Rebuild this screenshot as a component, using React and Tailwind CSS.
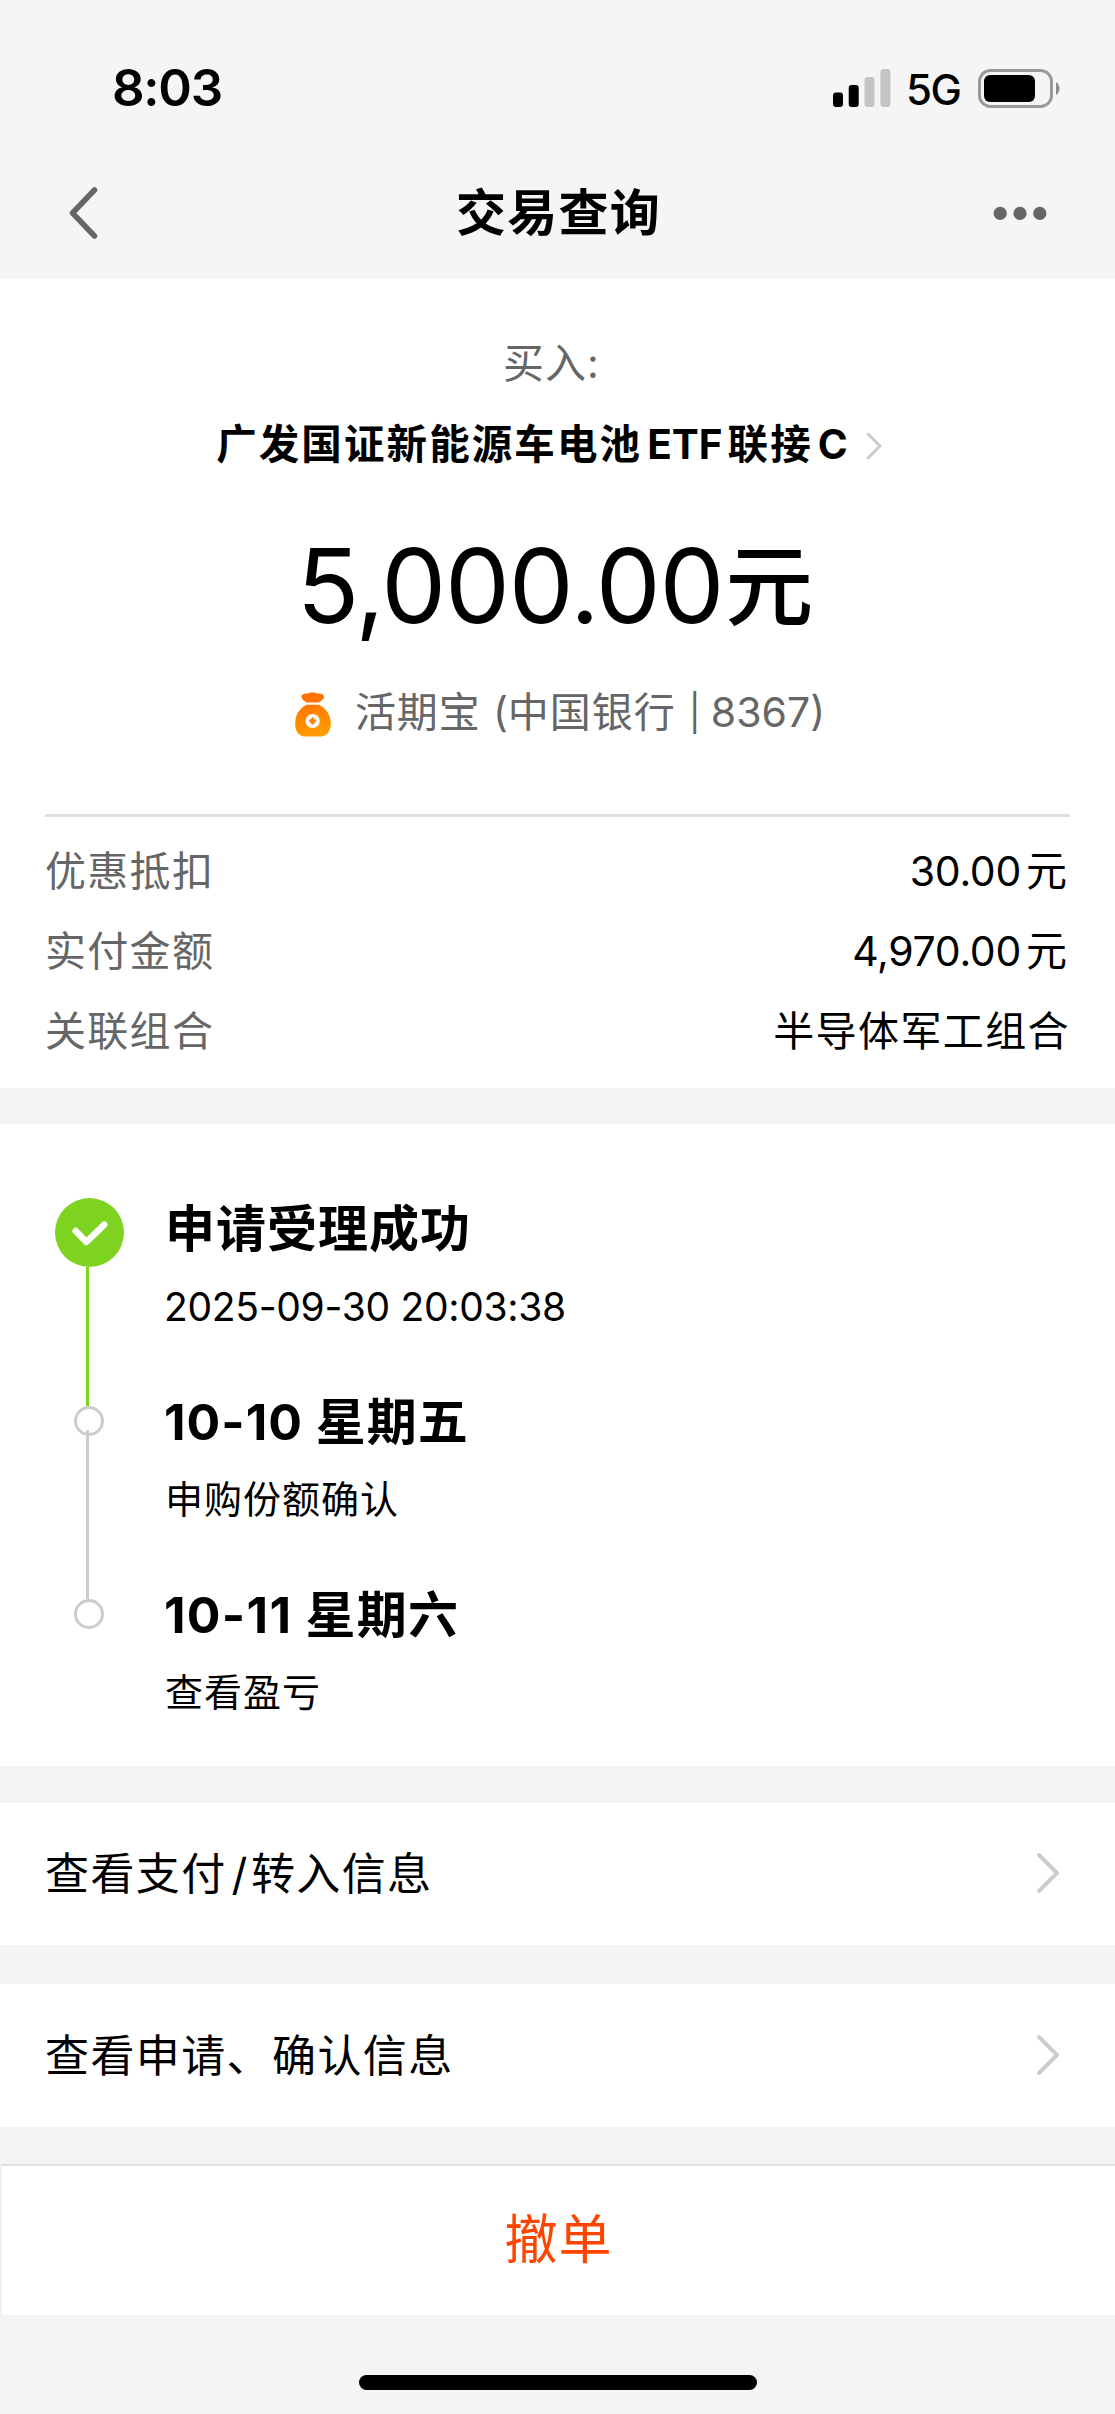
import React from "react";

function Chevron({ className, stroke = 4 }) {
  return (
    <svg viewBox="0 0 24 42" className={className} fill="none" stroke="#cccccc" strokeWidth={stroke} strokeLinecap="round" strokeLinejoin="round">
      <path d="M3 3 L21 21 L3 39" />
    </svg>
  );
}

function StatusBar() {
  return (
    <div className="flex h-[150px] justify-between bg-[#f5f5f5] pl-[112px] pr-[55px] pt-[58px]">
      <div className="h-[60px] text-[51px] font-semibold leading-[60px] tracking-[-1.3px]">8:03</div>
      <div className="flex h-[60px] items-center">
        <svg viewBox="0 0 58 38" className="h-[38px] w-[58px]">
          <rect x="0" y="23.5" width="10" height="14.5" rx="3" fill="#000" />
          <rect x="15.7" y="16" width="10" height="22" rx="3" fill="#000" />
          <rect x="31.5" y="8" width="10" height="30" rx="3" fill="#c4c4c4" />
          <rect x="47.4" y="0" width="10" height="38" rx="3" fill="#c4c4c4" />
        </svg>
        <div className="ml-[15px] mt-[3px] w-[72px] text-[42px] font-medium leading-[60px] tracking-[-1.5px]">5G</div>
        <svg viewBox="0 0 82 39" className="h-[39px] w-[82px]">
          <rect x="1.5" y="1.5" width="72" height="36" rx="11" fill="none" stroke="#999" strokeWidth="3" />
          <rect x="6" y="6" width="51" height="27" rx="6" fill="#000" />
          <path d="M78 13 C82.6 16 82.6 23 78 26 Z" fill="#8c8c8c" />
        </svg>
      </div>
    </div>
  );
}

function NavBar() {
  return (
    <div className="flex h-[129px] items-center justify-between bg-[#f5f5f5] pb-[3px] pl-[68px] pr-[68px]">
      <svg viewBox="0 0 30 54" className="h-[54px] w-[30px]" fill="none" stroke="#666" strokeWidth="5.5" strokeLinecap="round" strokeLinejoin="round">
        <path d="M26.5 4 L4.5 27 L26.5 50" />
      </svg>
      <div className="ml-[26px] text-[50px] font-bold leading-[70px] tracking-[1.3px]">交易查询</div>
      <svg viewBox="0 0 54 14" className="h-[14px] w-[54px]" fill="#666">
        <circle cx="7.2" cy="7.4" r="6.6" />
        <circle cx="27" cy="7.4" r="6.6" />
        <circle cx="46.8" cy="7.4" r="6.6" />
      </svg>
    </div>
  );
}

function MoneyBag() {
  return (
    <svg viewBox="0 0 36 45" className="relative left-[2px] top-[1px] h-[45px] w-[36px]">
      <defs>
        <linearGradient id="bag" x1="0" y1="0" x2="0.3" y2="1">
          <stop offset="0" stopColor="#ff7400" />
          <stop offset="1" stopColor="#ff9c00" />
        </linearGradient>
      </defs>
      <path d="M11.500 10.500 C9 8.500 6.300 7 6.500 4.800 C6.800 1.800 10.500 1 12.500 1.800 C14.500 0 20.500 0 22.500 1.800 C25 1 28.700 1.800 29 4.800 C29.200 7 26.500 8.500 24 10.500 Z" fill="#ff7200" />
      <path d="M11.500 12.800 H24 C31 16 35.800 23.500 35.800 31.500 C35.800 40.500 31 44.600 24.500 44.600 H11 C4.500 44.600 0.200 40.500 0.200 31.500 C0.200 23.500 4.500 16 11.500 12.800 Z" fill="url(#bag)" />
      <circle cx="17.700" cy="29" r="7.100" fill="#fff" />
      <path d="M17.700 25.500 L21.200 29 L17.700 32.500 L14.200 29 Z" fill="#ff8200" stroke="#ff8200" strokeWidth="0.800" strokeLinejoin="round" />
    </svg>
  );
}

function Summary() {
  const rows = [
    ["优惠抵扣", "30.00", "元"],
    ["实付金额", "4,970.00", "元"],
    ["关联组合", "", "半导体军工组合"],
  ];
  return (
    <section className="h-[809px] bg-white px-[45px] pt-[50px]">
      <div className="mr-[12px] flex h-[70px] items-center justify-center text-[41px] tracking-[1px] text-[#666]">
        买入:
      </div>
      <div className="mr-[16px] mt-[11px] flex h-[70px] items-center justify-center text-[40.500px] font-bold tracking-[2.1px]">
        <span>广发国证新能源车电池</span>
        <span className="ml-[5px] tracking-[0px]">ETF</span>
        <span className="ml-[5px]">联接</span>
        <span className="ml-[5px]">C</span>
        <Chevron className="ml-[15px] mt-[2px] h-[28px] w-[18px]" stroke={4.5} />
      </div>
      <div className="mr-[5px] mt-[36px] flex h-[140px] items-center justify-center text-black">
        <span className="text-[103px] leading-[140px] tracking-[-1.2px]">5,000.00</span>
        <span className="ml-[2px] text-[88px] font-medium leading-[140px]">元</span>
      </div>
      <div className="ml-[3px] mt-[22px] flex h-[70px] items-center justify-center text-[41px] text-[#666]">
        <MoneyBag />
        <span className="ml-[26px] tracking-[1px]">活期宝</span>
        <span className="ml-[12px]">(</span>
        <span className="tracking-[1px]">中国银行</span>
        <span className="ml-[13px] text-[36px]">|</span>
        <span className="ml-[10px]">8367)</span>
      </div>
      <div className="mt-[66px] h-[3px] bg-[#e0e0e0]" />
      <div className="mt-[15px]">
        {rows.map(([label, num, unit]) => (
          <div key={label} className="flex h-[80px] items-center justify-between text-[41px]">
            <span className="tracking-[1.3px] text-[#666]">{label}</span>
            <span className="flex items-center">
              <span className="tracking-[-0.3px]">{num}</span>
              <span className={num ? "ml-[5px] mr-[3px]" : "tracking-[1.4px]"}>{unit}</span>
            </span>
          </div>
        ))}
      </div>
    </section>
  );
}

function Timeline() {
  return (
    <section className="mt-[36px] flex h-[642px] bg-white pl-[54px] pt-[74px]">
      <div className="flex w-[70px] flex-col items-center">
        <svg viewBox="0 0 70 70" className="h-[69px] w-[69px]">
          <circle cx="35" cy="35" r="35" fill="#7ed321" />
          <path d="M21 33.500 L31.800 44.700 L50 27" fill="none" stroke="#fff" strokeWidth="6.500" strokeLinecap="round" strokeLinejoin="round" />
        </svg>
        <div className="mr-[3px] h-[139px] w-[3px] bg-[#7ed321]" />
        <div className="size-[30px] rounded-full border-[3px] border-[#ccc]" />
        <div className="-mt-[6px] mr-[3px] h-[169px] w-[3px] bg-[#ccc]" />
        <div className="size-[30px] rounded-full border-[3px] border-[#ccc]" />
      </div>
      <div className="ml-[41px] text-[38px] tracking-[1px]">
        <div className="h-[193px]">
          <div className="h-[70px] text-[50px] font-bold leading-[62px]">申请受理成功</div>
          <div className="-ml-px mt-[4px] text-[39px] leading-[70px] tracking-[-0.3px]">2025-09-30 20:03:38</div>
        </div>
        <div className="h-[193px]">
          <div className="-ml-px h-[70px] text-[50px] font-bold leading-[62px]">10-10 星期五</div>
          <div className="mt-[3px] leading-[70px]">申购份额确认</div>
        </div>
        <div className="h-[193px]">
          <div className="-ml-px h-[70px] text-[50px] font-bold leading-[62px] tracking-[1.3px]">10-11 星期六</div>
          <div className="mt-[3px] leading-[70px]">查看盈亏</div>
        </div>
      </div>
    </section>
  );
}

function LinkRow({ children, className }) {
  return (
    <div className={"flex items-center justify-between bg-white pl-[45px] pr-[55px] text-[44px] tracking-[1.4px] " + className}>
      <span>{children}</span>
      <Chevron className="mb-[2px] h-[42px] w-[24px]" />
    </div>
  );
}

export default function App() {
  return (
    <div lang="zh-CN" className="h-[2414px] w-[1115px] overflow-hidden bg-[#f4f4f4] font-['Inter','Noto_Sans_CJK_SC',sans-serif] text-black">
      <StatusBar />
      <NavBar />
      <Summary />
      <Timeline />
      <LinkRow className="mt-[37px] h-[142px]">
        查看支付<span className="ml-[5px] mr-[2px]">/</span>转入信息
      </LinkRow>
      <LinkRow className="mt-[39px] h-[143px]">查看申请、确认信息</LinkRow>
      <div className="mt-[37px] flex h-[151px] items-center justify-center border-l-2 border-t-2 border-l-[#f0f0f0] border-t-[#e0e0e0] bg-white text-[53px] tracking-[1px] text-[#ff4400]">
        撤单
      </div>
      <div className="mx-auto mt-[60px] h-[15px] w-[398px] rounded-full bg-black" />
    </div>
  );
}
